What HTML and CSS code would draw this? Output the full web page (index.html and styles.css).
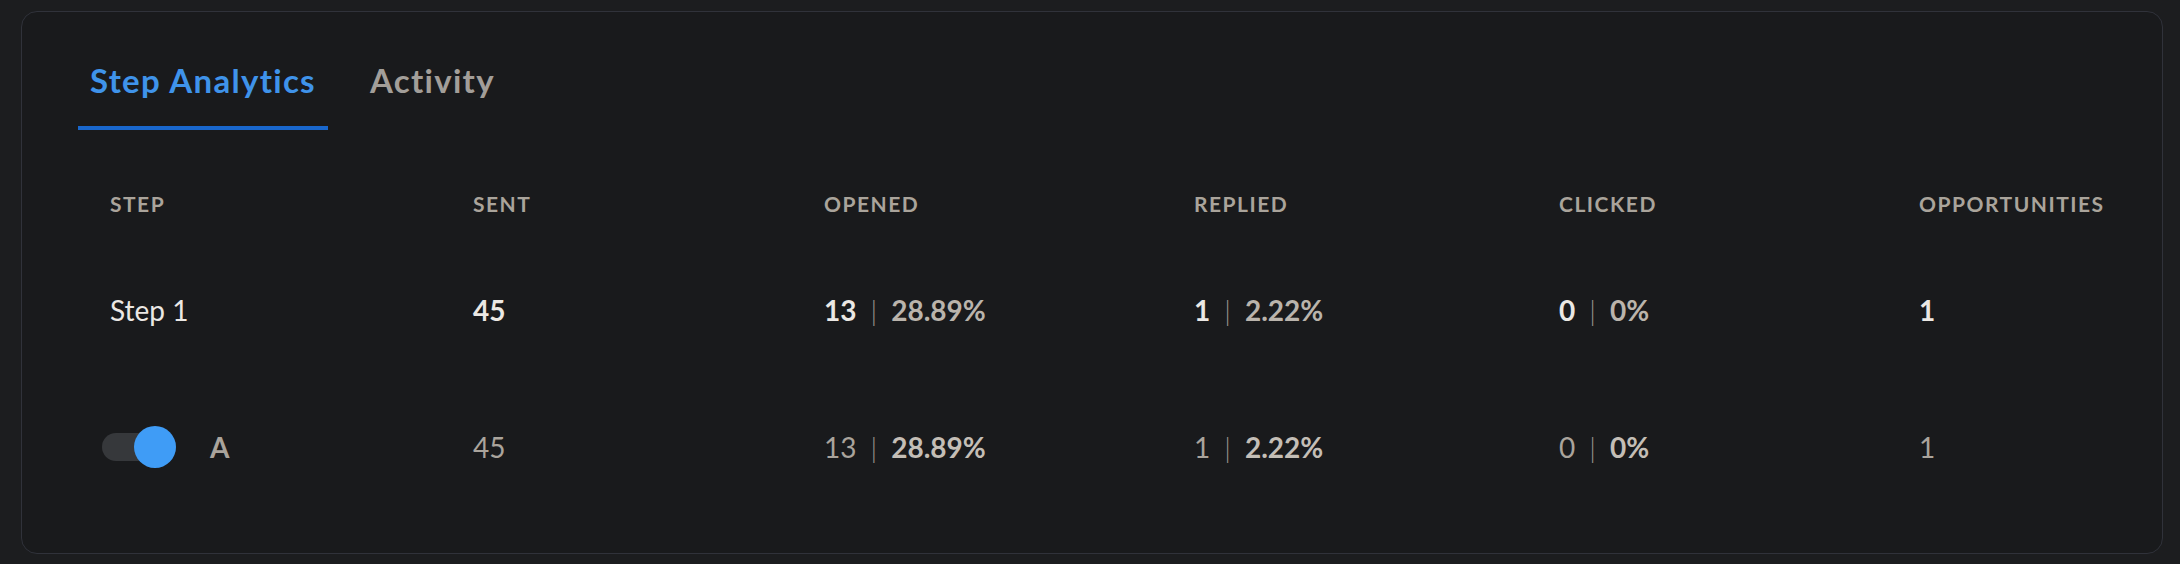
FILE: index.html
```html
<!DOCTYPE html>
<html lang="en">
<head>
   <meta charset="utf-8">
   <title>Step Analytics</title>
   <link rel="stylesheet" href="styles.css">
</head>
<body>

   <div class="card">
      <div class="tabs">
         <div class="tab active">Step Analytics</div>
         <div class="tab">Activity</div>
      </div>

      <div class="stats">
         <div class="row head">
            <div>Step</div>
            <div>Sent</div>
            <div>Opened</div>
            <div>Replied</div>
            <div>Clicked</div>
            <div>Opportunities</div>
         </div>

         <div class="row step">
            <div class="name">Step 1</div>
            <div class="num">45</div>
            <div><span class="num">13</span><span class="sep">|</span><span class="pct">28.89%</span></div>
            <div><span class="num">1</span><span class="sep">|</span><span class="pct">2.22%</span></div>
            <div><span class="num">0</span><span class="sep">|</span><span class="pct">0%</span></div>
            <div class="num">1</div>
         </div>

         <div class="row variant">
            <div class="name">
               <span class="toggle on"><span class="knob"></span></span>
               <span class="letter">A</span>
            </div>
            <div class="num">45</div>
            <div><span class="num">13</span><span class="sep">|</span><span class="pct">28.89%</span></div>
            <div><span class="num">1</span><span class="sep">|</span><span class="pct">2.22%</span></div>
            <div><span class="num">0</span><span class="sep">|</span><span class="pct">0%</span></div>
            <div class="num">1</div>
         </div>
      </div>
   </div>

</body>
</html>
```

FILE: styles.css
```css
body {
   margin: 0;
   padding: 11px 17px 11px 21px;
   background: #1c1d1f;
   font-family: Lato, "Liberation Sans", sans-serif;
}

.card {
   background: #191a1c;
   border: 1px solid #30323a;
   border-radius: 16px;
   padding: 48px 56px 38px 56px;
}

.tabs {
   display: flex;
   gap: 30px;
}

.tab {
   padding: 0 12px 26px 12px;
   font-size: 33px;
   line-height: 40px;
   font-weight: 700;
   letter-spacing: 1.3px;
   color: #a29e99;
   border-bottom: 4px solid transparent;
}

.tab.active {
   color: #3f93ea;
   border-bottom-color: #1967cc;
}

.stats {
   margin-top: 45px;
   padding-left: 32px;
}

.row {
   display: grid;
   grid-template-columns: 363px 351px 370px 365px 360px 1fr;
   align-items: center;
   height: 137px;
   font-size: 28px;
   color: #aaa49c;
}

.row.head {
   height: 56px;
   margin-bottom: 10px;
   font-size: 21px;
   font-weight: 700;
   letter-spacing: 1.5px;
   text-transform: uppercase;
   color: #aaa49b;
}

.sep {
   margin: 0 14px;
   font-weight: 300;
   color: #9a948d;
}

.step .name {
   color: #ebe8e4;
}

.step .num {
   font-weight: 700;
   color: #ebe8e4;
}

.step .pct {
   font-weight: 700;
   color: #bab4ac;
}

.variant .pct {
   font-weight: 700;
   color: #c4beb6;
}

.variant .name {
   display: flex;
   align-items: center;
   gap: 34px;
}

.letter {
   font-weight: 700;
   color: #aaa49c;
}

.toggle {
   position: relative;
   display: inline-block;
   width: 74px;
   height: 28px;
   margin-left: -8px;
   border-radius: 14px;
   background: #36383b;
}

.knob {
   position: absolute;
   top: -7px;
   right: 0;
   width: 42px;
   height: 42px;
   border-radius: 50%;
   background: #3f9cf6;
}
```
